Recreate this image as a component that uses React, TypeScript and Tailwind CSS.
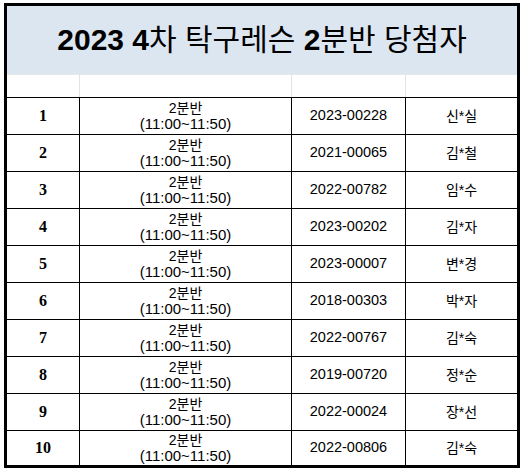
// 탁구레슨 당첨자 명단 — 엑셀 표 모양 그대로
const ROWS = [
  { no: 1, id: "2023-00228", name: "신*실" },
  { no: 2, id: "2021-00065", name: "김*철" },
  { no: 3, id: "2022-00782", name: "임*수" },
  { no: 4, id: "2023-00202", name: "김*자" },
  { no: 5, id: "2023-00007", name: "변*경" },
  { no: 6, id: "2018-00303", name: "박*자" },
  { no: 7, id: "2022-00767", name: "김*숙" },
  { no: 8, id: "2019-00720", name: "정*순" },
  { no: 9, id: "2022-00024", name: "장*선" },
  { no: 10, id: "2022-00806", name: "김*숙" },
];

const SANS = "font-['Liberation_Sans','Noto_Sans_CJK_KR',sans-serif]";

export default function App() {
  return (
    <div className="h-[472px] w-[524px] bg-white pl-[4px] pt-[3px]">
      <div className={`w-[516px] border-[3px] border-black text-black ${SANS}`}>
        {/* 제목 */}
        <div className="flex h-[68px] items-center justify-center bg-[#dce6f1] text-[30px] leading-none">
          <span className="font-bold">2023 4</span>
          <span>차 탁구레슨&nbsp;</span>
          <span className="font-bold">2</span>
          <span>분반 당첨자</span>
        </div>

        {/* 빈 줄 */}
        <div className="grid h-[23px] grid-cols-[72px_212px_114px_112px] border-t border-[#e3eae3]">
          <div />
          <div className="border-l border-[#dfe8df]" />
          <div className="border-l border-[#dfe8df]" />
          <div className="border-l border-[#dfe8df]" />
        </div>

        {ROWS.map((r) => (
          <div
            key={r.no}
            className={`grid grid-cols-[72px_212px_114px_112px] border-t border-black ${
              r.no === 10 ? "h-[35px]" : "h-[37px]"
            }`}
          >
            <div className="flex items-center justify-center font-['Liberation_Serif',serif] text-[16px] font-bold">
              {r.no}
            </div>
            <div className="flex flex-col items-center justify-center border-l border-black leading-[16px]">
              <span className="text-[14px]">2분반</span>
              <span className="text-[15px]">(11:00~11:50)</span>
            </div>
            <div className="flex items-center justify-center border-l border-black text-[14.5px]">
              {r.id}
            </div>
            <div className="flex items-center justify-center border-l border-black text-[14px]">
              {r.name}
            </div>
          </div>
        ))}
      </div>
    </div>
  );
}
